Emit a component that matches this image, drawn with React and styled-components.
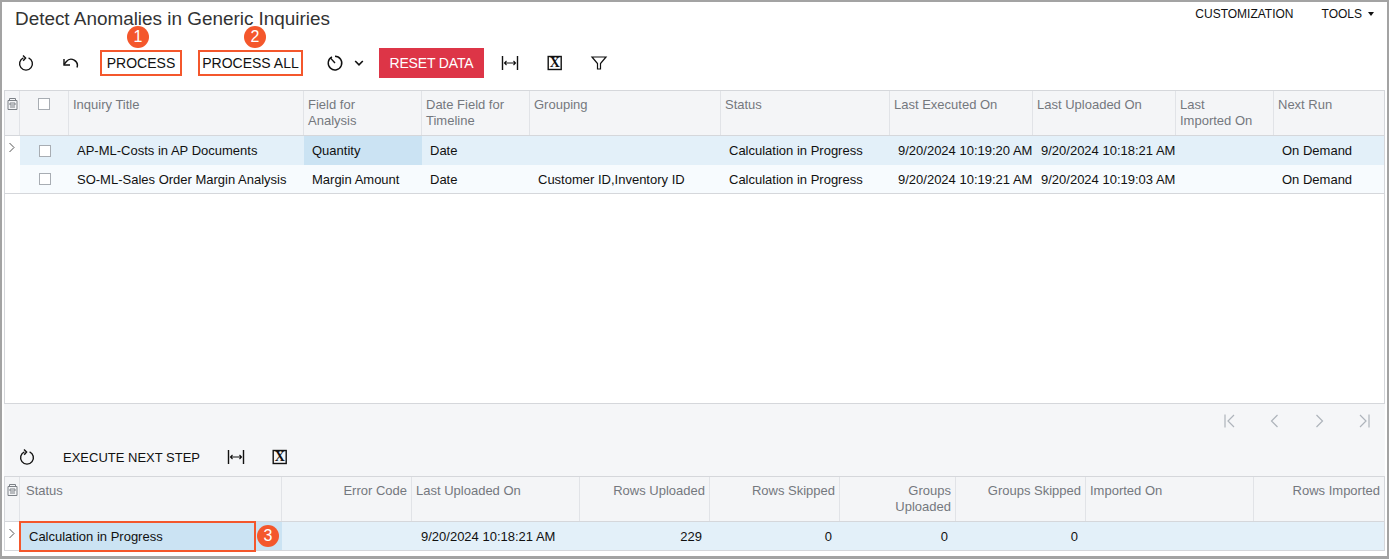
import styled, { createGlobalStyle } from "styled-components"

const GlobalStyle = createGlobalStyle`
  html, body {
    margin: 0;
    padding: 0;
    background: #fff;
    font-family: "Liberation Sans", Arial, sans-serif;
  }
`

const TOP_COLS = "15px 49px 235px 118px 108px 191px 169px 143px 143px 98px 1fr"
const BOTTOM_COLS = "15px 262px 130px 168px 130px 130px 116px 130px 168px 1fr"

const Frame = styled.div`
  width: 1389px;
  height: 559px;
  box-sizing: border-box;
  border: 2px solid #a3a3a3;
  border-bottom-width: 3px;
  display: flex;
  flex-direction: column;
  background: #fff;
  color: #111;
  overflow: hidden;
`
const TitleRow = styled.div`
  height: 46px;
  flex: none;
  display: flex;
  justify-content: space-between;
  align-items: flex-start;
  padding: 0 13px 0 13px;
`
const Title = styled.h1`
  margin: 7px 0 0;
  font-size: 18.9px;
  line-height: 20px;
  font-weight: 400;
  color: #333;
`
const TopMenu = styled.div`
  display: flex;
  gap: 28px;
  font-size: 12px;
  line-height: 16px;
  margin-top: 4px;
`
const Caret = styled.span`
  display: inline-block;
  margin-left: 6px;
  vertical-align: 2px;
  border: 3px solid transparent;
  border-top: 4px solid #111;
  border-bottom: 0;
`
const Toolbar = styled.div`
  height: 30px;
  flex: none;
  display: flex;
  align-items: center;
  padding-left: 2px;
  margin-bottom: 12px;
`
const SubToolbar = styled(Toolbar)`
  height: 33px;
  box-sizing: border-box;
  margin: 0 2px;
  padding: 0 0 5px 0;
  background: #f5f6f8;
`
const IconButton = styled.div`
  width: ${p => p.$w || 44}px;
  height: 28px;
  margin-left: ${p => p.$ml || 0}px;
  flex: none;
  display: flex;
  align-items: center;
  justify-content: center;
  color: ${p => p.$muted ? "#aeb4bb" : "#111"};
`
const TextButton = styled.div`
  position: relative;
  box-sizing: border-box;
  width: ${p => p.$w}px;
  height: 26px;
  margin-left: ${p => p.$ml || 0}px;
  flex: none;
  display: flex;
  align-items: center;
  justify-content: center;
  font-size: ${p => p.$small ? 13 : 14}px;
  white-space: nowrap;
  color: #111;
  border: ${p => p.$marked ? "2px solid #f4572c" : "0"};
`
const ResetButton = styled.div`
  width: 105px;
  height: 30px;
  margin-left: 14px;
  flex: none;
  display: flex;
  align-items: center;
  justify-content: center;
  font-size: 14px;
  letter-spacing: -0.15px;
  color: #fff;
  background: #dd3547;
`
const Badge = styled.span`
  position: absolute;
  top: ${p => p.$top}px;
  left: ${p => p.$left}px;
  width: 22px;
  height: 22px;
  border-radius: 50%;
  display: flex;
  align-items: center;
  justify-content: center;
  background: #f4572c;
  color: #fff;
  font-size: 16px;
  line-height: 1;
`
const Grid = styled.div`
  margin: 0 2px;
  border: 1px solid #d5d7db;
  border-bottom: 0;
  background: #fff;
  flex: ${p => p.$grow ? 1 : "none"};
`
const HeaderRow = styled.div`
  display: grid;
  grid-template-columns: ${p => p.$cols};
  height: 45px;
  box-sizing: border-box;
  background: #f4f5f7;
  border-bottom: 1px solid #d5d7db;
`
const HeaderCell = styled.div`
  box-sizing: border-box;
  padding: 6px 4px 0 ${p => p.$inset ? 6 : 4}px;
  border-right: 1px solid #e1e3e7;
  font-size: 13px;
  line-height: 16px;
  color: #74787e;
  white-space: nowrap;
  text-align: ${p => p.$right ? "right" : "left"};
  &:last-child {
    border-right: 0;
  }
`
const IndicatorHead = styled(HeaderCell)`
  padding: 7px 0 0 2px;
`
const CheckCell = styled.div`
  display: flex;
  justify-content: center;
  padding-top: ${p => p.$head ? 7 : 0}px;
  align-items: ${p => p.$head ? "flex-start" : "center"};
  border-right: ${p => p.$head ? "1px solid #e1e3e7" : "0"};
`
const Checkbox = styled.span`
  box-sizing: border-box;
  width: 12px;
  height: 12px;
  background: #fff;
  border: 1px solid #a8adb3;
`
const Row = styled.div`
  display: grid;
  grid-template-columns: ${p => p.$cols};
  height: 29px;
  box-sizing: border-box;
  background: ${p => p.$active ? "#e3f0f9" : "#f7fbfe"};
  border-bottom: ${p => p.$last ? "1px solid #d5d7db" : "0"};
  font-size: 13px;
`
const Cell = styled.div`
  position: relative;
  display: flex;
  align-items: center;
  justify-content: ${p => p.$right ? "flex-end" : "flex-start"};
  padding: 0 8px 0 ${p => p.$inset ? 9 : 8}px;
  white-space: nowrap;
  background: ${p => p.$selected ? "#cbe3f3" : "transparent"};
`
const Indicator = styled.div`
  display: flex;
  align-items: flex-start;
  padding: 6px 0 0 3px;
  background: #fff;
  color: #555;
`
const MarkedBox = styled.span`
  position: absolute;
  top: -1px;
  left: -1px;
  width: 237px;
  height: 31px;
  box-sizing: border-box;
  border: 2px solid #f4572c;
`
const PagerBand = styled.div`
  height: 40px;
  flex: none;
  box-sizing: border-box;
  margin: 0 2px;
  padding-bottom: 5px;
  display: flex;
  justify-content: flex-end;
  align-items: center;
  background: #f5f6f8;
  border-top: 1px solid #d5d7db;
`
const BottomGap = styled.div`
  height: 5px;
  flex: none;
  background: #fff;
`

const Icon = ({ children, size = 18 }) => (
  <svg width={size} height={size} viewBox="0 0 18 18" fill="none" stroke="currentColor" strokeWidth="1.4">
    {children}
  </svg>
)

const RefreshIcon = () => (
  <Icon>
    <path d="M6.4 3.9a6.4 6.4 0 1 0 5.2 0" />
    <path d="M6 1.4 8.6 4 6.2 6.8" />
  </Icon>
)
const UndoIcon = () => (
  <Icon>
    <path d="M16 13.5a6.2 6.2 0 0 0-10.6-6L3 10.5" />
    <path d="M3 5v6h6" />
  </Icon>
)
const TimerIcon = () => (
  <Icon>
    <path d="M6 3a6.8 6.8 0 1 0 3-.7" />
    <path d="M4.8 4.4 9 9" />
  </Icon>
)
const ChevronIcon = () => (
  <svg width="10" height="10" viewBox="0 0 10 10" fill="none" stroke="currentColor" strokeWidth="1.6">
    <path d="M1.2 3 5 6.8 8.8 3" />
  </svg>
)
const FitIcon = () => (
  <Icon>
    <path d="M1.5 2v14M16.5 2v14" />
    <path d="M3.5 9h11M5.5 7 3.5 9l2 2M12.5 7l2 2-2 2" strokeWidth="1.1" />
  </Icon>
)
const ExcelIcon = () => (
  <svg width="16" height="16" viewBox="0 0 16 16">
    <rect x="1.2" y="1.5" width="13" height="13" fill="none" stroke="currentColor" strokeWidth="1.4" />
    <text x="7.7" y="12.3" textAnchor="middle" fontFamily="'Liberation Serif', serif" fontWeight="700" fontSize="14" fill="currentColor">X</text>
  </svg>
)
const FilterIcon = () => (
  <Icon>
    <path d="M2 3h14l-5.5 6.5V15h-3V9.5z" strokeWidth="1.2" />
  </Icon>
)
const DocIcon = () => (
  <svg width="11" height="12" viewBox="0 0 11 12" fill="none" stroke="#7c8187" strokeWidth="1">
    <path d="M2.5.5h6v2h-6zM1 2.5h9v9H1zM3 5h5v2H3zM3 9h5" />
  </svg>
)
const RowChevron = () => (
  <svg width="8" height="12" viewBox="0 0 8 12" fill="none" stroke="currentColor" strokeWidth="1">
    <path d="M1.5 1 6 5.5 1.5 10" />
  </svg>
)
const PagerIcon = ({ d, bar }) => (
  <Icon>
    <path d={d} strokeWidth="1.2" />
    {bar && <path d={bar} strokeWidth="1.2" />}
  </Icon>
)

const topHeaders = [
  ["Inquiry Title"],
  ["Field for", "Analysis"],
  ["Date Field for", "Timeline"],
  ["Grouping"],
  ["Status"],
  ["Last Executed On"],
  ["Last Uploaded On"],
  ["Last", "Imported On"],
  ["Next Run"],
]

const topRows = [
  ["AP-ML-Costs in AP Documents", "Quantity", "Date", "", "Calculation in Progress", "9/20/2024 10:19:20 AM", "9/20/2024 10:18:21 AM", "", "On Demand"],
  ["SO-ML-Sales Order Margin Analysis", "Margin Amount", "Date", "Customer ID,Inventory ID", "Calculation in Progress", "9/20/2024 10:19:21 AM", "9/20/2024 10:19:03 AM", "", "On Demand"],
]

const bottomHeaders = [
  { text: ["Status"], inset: true },
  { text: ["Error Code"], right: true },
  { text: ["Last Uploaded On"] },
  { text: ["Rows Uploaded"], right: true },
  { text: ["Rows Skipped"], right: true },
  { text: ["Groups", "Uploaded"], right: true },
  { text: ["Groups Skipped"], right: true },
  { text: ["Imported On"] },
  { text: ["Rows Imported"], right: true },
]

const HeaderText = ({ lines }) => lines.map(line => <div key={line}>{line}</div>)

export default function App() {
  return (
    <>
      <GlobalStyle />
      <Frame>
        <TitleRow>
          <Title>Detect Anomalies in Generic Inquiries</Title>
          <TopMenu>
            <span>CUSTOMIZATION</span>
            <span>TOOLS<Caret /></span>
          </TopMenu>
        </TitleRow>

        <Toolbar>
          <IconButton><RefreshIcon /></IconButton>
          <IconButton><UndoIcon /></IconButton>
          <TextButton $w={82} $ml={8} $marked>
            PROCESS
            <Badge $top={-26} $left={25}>1</Badge>
          </TextButton>
          <TextButton $w={105} $ml={16} $marked>
            PROCESS ALL
            <Badge $top={-26} $left={44}>2</Badge>
          </TextButton>
          <IconButton $ml={12} $w={40}><TimerIcon /></IconButton>
          <IconButton $ml={-2} $w={12}><ChevronIcon /></IconButton>
          <ResetButton>RESET DATA</ResetButton>
          <IconButton $ml={4}><FitIcon /></IconButton>
          <IconButton $ml={1}><ExcelIcon /></IconButton>
          <IconButton><FilterIcon /></IconButton>
        </Toolbar>

        <Grid $grow>
          <HeaderRow $cols={TOP_COLS}>
            <IndicatorHead><DocIcon /></IndicatorHead>
            <CheckCell $head><Checkbox /></CheckCell>
            {topHeaders.map(lines => (
              <HeaderCell key={lines[0]}><HeaderText lines={lines} /></HeaderCell>
            ))}
          </HeaderRow>
          {topRows.map((row, i) => (
            <Row key={row[0]} $cols={TOP_COLS} $active={i === 0} $last={i === 1}>
              <Indicator>{i === 0 && <RowChevron />}</Indicator>
              <CheckCell><Checkbox /></CheckCell>
              {row.map((text, j) => (
                <Cell key={j} $selected={i === 0 && j === 1}>{text}</Cell>
              ))}
            </Row>
          ))}
        </Grid>

        <PagerBand>
          <IconButton $muted><PagerIcon bar="M3 2.5v13" d="M12 3 6 9l6 6" /></IconButton>
          <IconButton $muted><PagerIcon d="M11.5 3l-6 6 6 6" /></IconButton>
          <IconButton $muted><PagerIcon d="M6.5 3l6 6-6 6" /></IconButton>
          <IconButton $muted><PagerIcon bar="M15 2.5v13" d="M6 3l6 6-6 6" /></IconButton>
        </PagerBand>

        <SubToolbar>
          <IconButton $ml={1}><RefreshIcon /></IconButton>
          <TextButton $w={137} $ml={14} $small>EXECUTE NEXT STEP</TextButton>
          <IconButton $ml={14}><FitIcon /></IconButton>
          <IconButton><ExcelIcon /></IconButton>
        </SubToolbar>

        <Grid>
          <HeaderRow $cols={BOTTOM_COLS}>
            <IndicatorHead><DocIcon /></IndicatorHead>
            {bottomHeaders.map(h => (
              <HeaderCell key={h.text[0]} $right={h.right} $inset={h.inset}><HeaderText lines={h.text} /></HeaderCell>
            ))}
          </HeaderRow>
          <Row $cols={BOTTOM_COLS} $active $last>
            <Indicator><RowChevron /></Indicator>
            <Cell $selected $inset>
              Calculation in Progress
              <MarkedBox />
              <Badge $top={3} $left={237}>3</Badge>
            </Cell>
            <Cell />
            <Cell $inset>9/20/2024 10:18:21 AM</Cell>
            <Cell $right>229</Cell>
            <Cell $right>0</Cell>
            <Cell $right>0</Cell>
            <Cell $right>0</Cell>
            <Cell />
            <Cell />
          </Row>
        </Grid>
        <BottomGap />
      </Frame>
    </>
  )
}
